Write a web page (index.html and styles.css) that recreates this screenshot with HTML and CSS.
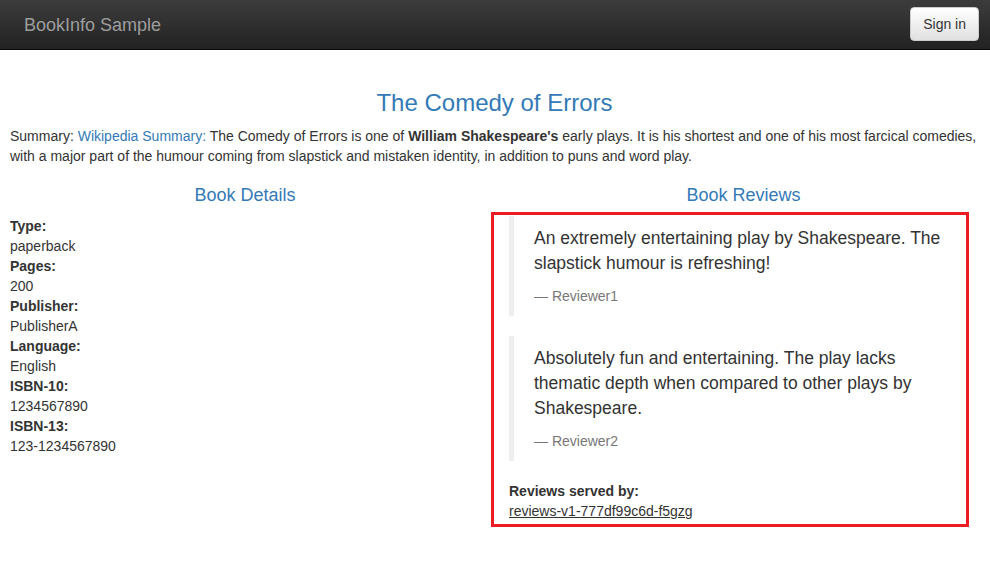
FILE: index.html
```html
<!DOCTYPE html>
<html lang="en">
<head>
<meta charset="utf-8">
<title>BookInfo Sample</title>
<link rel="stylesheet" href="styles.css">
</head>
<body>
<nav class="navbar">
  <span class="brand">BookInfo Sample</span>
  <button class="btn" type="button">Sign in</button>
</nav>
<main class="page">
  <h3 class="title">The Comedy of Errors</h3>
  <p class="summary">Summary: <a href="#" class="link">Wikipedia Summary:</a> The Comedy of Errors is one of <b>William Shakespeare's</b> early plays. It is his shortest and one of his most farcical comedies, with a major part of the humour coming from slapstick and mistaken identity, in addition to puns and word play.</p>
  <div class="row">
    <section class="col">
      <h4 class="heading">Book Details</h4>
      <dl class="details">
        <dt>Type:</dt><dd>paperback</dd>
        <dt>Pages:</dt><dd>200</dd>
        <dt>Publisher:</dt><dd>PublisherA</dd>
        <dt>Language:</dt><dd>English</dd>
        <dt>ISBN-10:</dt><dd>1234567890</dd>
        <dt>ISBN-13:</dt><dd>123-1234567890</dd>
      </dl>
    </section>
    <section class="col col-right">
      <h4 class="heading">Book Reviews</h4>
      <div class="reviews">
        <blockquote class="quote">
          <p>An extremely entertaining play by Shakespeare. The slapstick humour is refreshing!</p>
          <footer class="author">— Reviewer1</footer>
        </blockquote>
        <blockquote class="quote">
          <p>Absolutely fun and entertaining. The play lacks thematic depth when compared to other plays by Shakespeare.</p>
          <footer class="author">— Reviewer2</footer>
        </blockquote>
        <dl class="served">
          <dt>Reviews served by:</dt>
          <dd><u>reviews-v1-777df99c6d-f5gzg</u></dd>
        </dl>
      </div>
    </section>
  </div>
</main>
</body>
</html>
```
FILE: styles.css
```css
* { box-sizing: border-box; }
html, body { margin: 0; padding: 0; }
body {
  font-family: "Liberation Sans", Arial, Helvetica, sans-serif;
  font-size: 14px;
  line-height: 20px;
  color: #333;
  background: #fff;
}
.navbar {
  height: 50px;
  display: flex;
  align-items: center;
  justify-content: space-between;
  padding: 0 11px 0 24px;
  background: linear-gradient(to bottom, #3c3c3c 0%, #222 100%);
  border-bottom: 1px solid #080808;
}
.brand {
  font-size: 18px;
  color: #9d9d9d;
  line-height: 20px;
}
.btn {
  font-family: inherit;
  font-size: 14px;
  line-height: 20px;
  color: #333;
  height: 34px;
  padding: 6px 12px;
  border: 1px solid #ccc;
  border-radius: 4px;
  background: linear-gradient(to bottom, #fff 0%, #e0e0e0 100%);
  box-shadow: inset 0 1px 0 rgba(255,255,255,.15), 0 1px 1px rgba(0,0,0,.075);
  margin-top: -1px;
}
.page {
  padding: 20px 4px 0 10px;
}
.title {
  margin: 20px 0 10px;
  padding-right: 7px;
  font-size: 24px;
  font-weight: 500;
  line-height: 26.4px;
  color: #337ab7;
  text-align: center;
}
.summary { margin: 0 0 10px; }
.link { color: #337ab7; text-decoration: none; }
.row {
  display: grid;
  grid-template-columns: 470px 1fr;
  column-gap: 29px;
}
.col-right { padding-right: 8px; }
.heading {
  margin: 10px 0 10px;
  font-size: 18px;
  font-weight: 500;
  line-height: 19.8px;
  color: #337ab7;
  text-align: center;
}
.details, .served { margin: 0; }
dt { font-weight: bold; }
dd { margin: 0; }
.reviews {
  margin: -4px 9px 0 -18px;
  border: 3px solid #ed1c24;
  padding: 1px 0 3px 15px;
}
.quote {
  margin: 0 0 20px;
  padding: 10px 10px 10px 20px;
  border-left: 5px solid #eee;
  font-size: 17.5px;
  line-height: 25px;
}
.quote p { margin: 0 0 10px; }
.author {
  font-size: 14px;
  line-height: 20px;
  color: #777;
}
```
